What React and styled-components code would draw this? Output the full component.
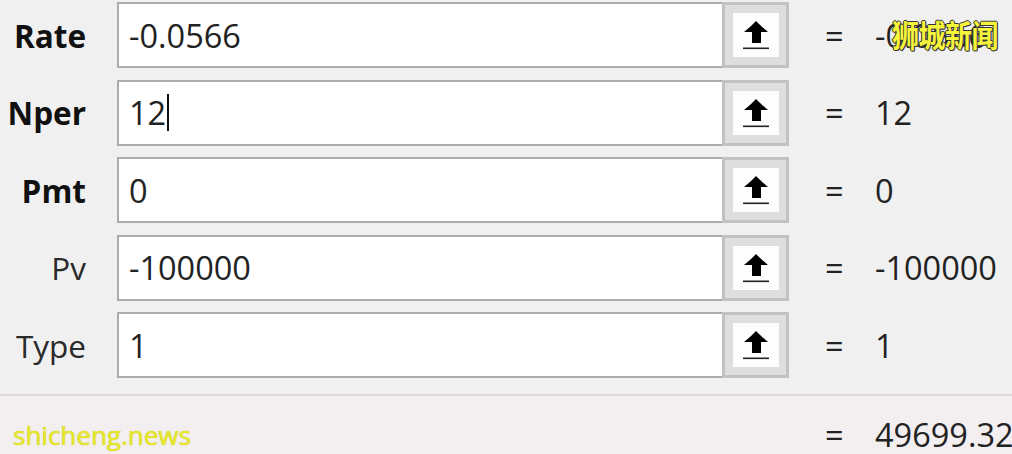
import React from "react";
import styled, { createGlobalStyle } from "styled-components";

const Global = createGlobalStyle`
  html, body { margin: 0; padding: 0; }
  body { width: 1012px; height: 454px; overflow: hidden; background: #f0f0f0; }
  #root { width: 1012px; height: 454px; }
`;

const Page = styled.div`
  position: relative;
  width: 1012px;
  height: 454px;
  overflow: hidden;
  display: flex;
  flex-direction: column;
  background: #f0f0f0;
  font-family: "Open Sans", "Noto Sans", sans-serif;
  color: #1b1b1b;
`;

const ArgsList = styled.div`
  flex: none;
  display: grid;
  grid-template-columns: 117px 672px 1fr;
  grid-auto-rows: 66px;
  row-gap: 11.5px;
  padding-top: 2px;
`;

const Label = styled.div`
  display: flex;
  align-items: center;
  justify-content: flex-end;
  padding-right: 31px;
  font-size: 31.5px;
  font-weight: ${(p) => (p.$required ? 700 : 400)};
  color: ${(p) => (p.$required ? "#111" : "#2a2a2a")};
`;

const Field = styled.div`
  display: flex;
  height: 66px;
`;

const InputBox = styled.div`
  flex: 1;
  display: flex;
  align-items: center;
  box-sizing: border-box;
  background: #fff;
  border: 2px solid #adadad;
  border-right: none;
  padding-left: 10px;
  font-size: 32.5px;
  color: #222;
`;

const Caret = styled.span`
  display: inline-block;
  width: 2px;
  height: 37px;
  margin-left: 1px;
  background: #111;
  vertical-align: middle;
`;

const RefButton = styled.div`
  width: 67px;
  box-sizing: border-box;
  border: 3px solid #c2c2c2;
  background: #dedede;
  display: flex;
  align-items: center;
  justify-content: center;
`;

const ButtonFace = styled.div`
  width: 46px;
  height: 44px;
  background: #fdfdfd;
  display: flex;
  align-items: center;
  justify-content: center;
`;

const Result = styled.div`
  display: flex;
  align-items: center;
  padding-left: 36px;
  font-size: 32.5px;
  color: #222;
  white-space: nowrap;
`;

const Eq = styled.span`
  width: 50px;
  flex: none;
`;

const Value = styled.span`
  position: relative;
`;

const Divider = styled.div`
  flex: none;
  margin-top: 16px;
  height: 2px;
  background: #dcd9db;
`;

const Footer = styled.div`
  position: relative;
  flex: 1;
  min-height: 0;
  overflow: hidden;
  background: #f3eff1;
  display: flex;
  align-items: flex-start;
  padding-left: 825px;
  padding-top: 22px;
  box-sizing: border-box;
  font-size: 32.5px;
  line-height: 34px;
  color: #222;
  white-space: nowrap;
`;

const CnMark = styled.span`
  position: absolute;
  left: 17px;
  top: -2px;
  font-family: "Noto Sans CJK SC", sans-serif;
  font-size: 27px;
  font-weight: 700;
  letter-spacing: -0.5px;
  color: #f7f43c;
  transform: scaleY(1.15);
  transform-origin: left top;
  text-shadow: -1px 0 #333, 1px 0 #333, 0 -1px #333, 0 1px #333, 1px 1px #555;
`;

const SiteMark = styled.span`
  position: absolute;
  left: 13px;
  top: 24px;
  font-family: "Open Sans", sans-serif;
  font-size: 26px;
  line-height: 30px;
  color: #e8e82a;
  text-shadow: 0 0 1px #b8b800;
`;

const UpArrow = () => (
  <svg width="30" height="32" viewBox="0 0 30 32">
    <path d="M15 2 C18 5 22 9 27 13 L20 13 L20 24 L11 24 L11 13 L3 13 C8 9 12 5 15 2 Z" fill="#000" />
    <rect x="2" y="28.5" width="26" height="1.6" fill="#222" />
  </svg>
);

const args = [
  { name: "Rate", required: true, input: "-0.0566", value: "-0.0566" },
  { name: "Nper", required: true, input: "12", value: "12", caret: true },
  { name: "Pmt", required: true, input: "0", value: "0" },
  { name: "Pv", required: false, input: "-100000", value: "-100000" },
  { name: "Type", required: false, input: "1", value: "1" },
];

export default function App() {
  return (
    <Page>
      <Global />
      <ArgsList>
        {args.map((a, i) => (
          <React.Fragment key={a.name}>
            <Label $required={a.required}>{a.name}</Label>
            <Field>
              <InputBox>
                {a.input}
                {a.caret && <Caret />}
              </InputBox>
              <RefButton>
                <ButtonFace>
                  <UpArrow />
                </ButtonFace>
              </RefButton>
            </Field>
            <Result>
              <Eq>=</Eq>
              <Value>
                {a.value}
                {i === 0 && <CnMark>狮城新闻</CnMark>}
              </Value>
            </Result>
          </React.Fragment>
        ))}
      </ArgsList>
      <Divider />
      <Footer>
        <SiteMark>shicheng.news</SiteMark>
        <Eq>=</Eq>
        <Value>49699.32</Value>
      </Footer>
    </Page>
  );
}
